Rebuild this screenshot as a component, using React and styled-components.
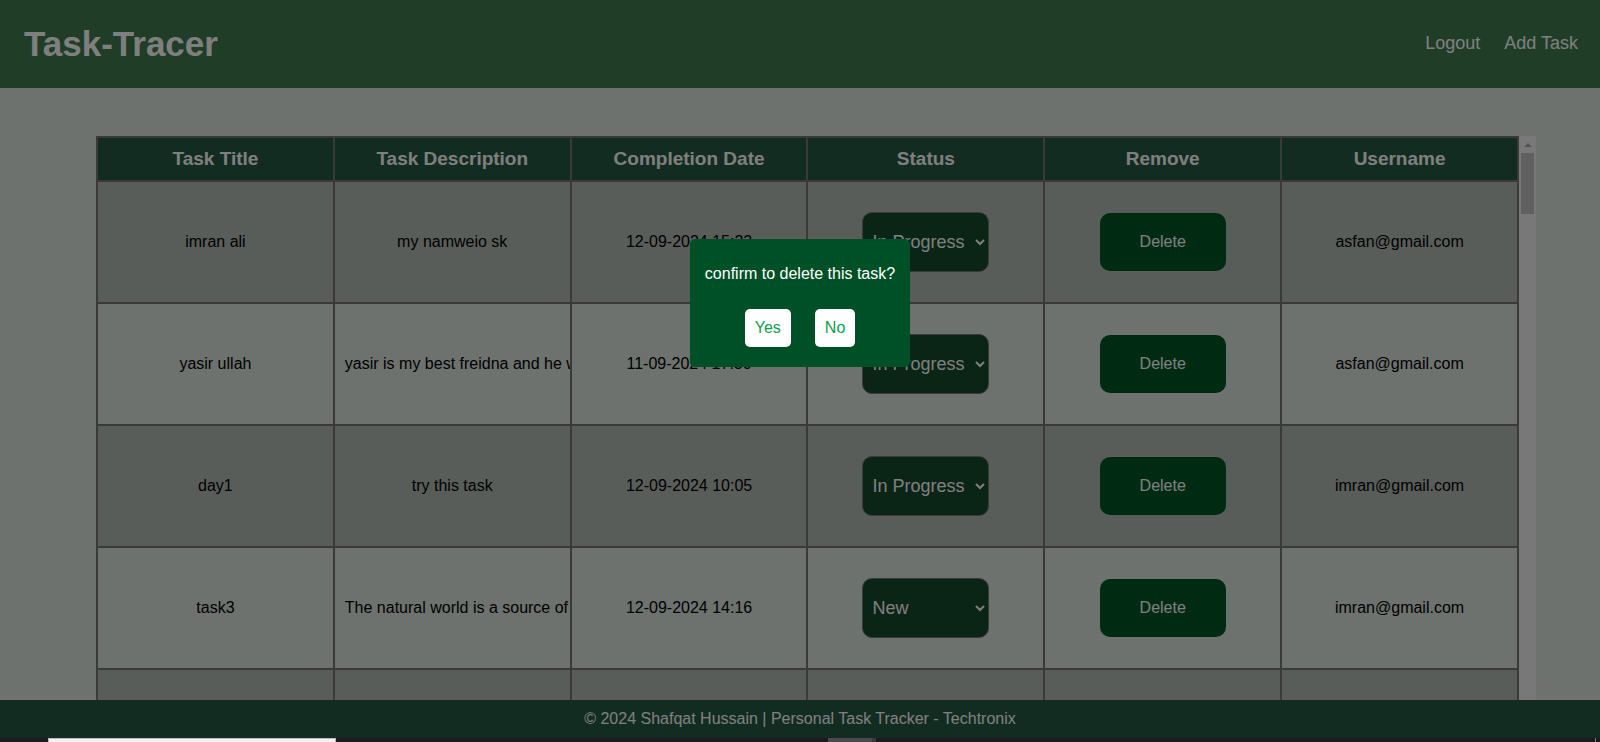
import React from "react";
import styled, { createGlobalStyle } from "styled-components";

const GlobalStyle = createGlobalStyle`
  * { box-sizing: border-box; }
  html, body { margin: 0; height: 100%; overflow: hidden; }
  #root { height: 100%; }
  body, button, select { font-family: "Liberation Sans", Arial, sans-serif; font-size: 16px; }
`;

const Page = styled.div`
  height: 100%;
  display: flex;
  flex-direction: column;
  background: #dbe4dd;
`;

const Header = styled.header`
  flex: none;
  height: 88px;
  padding: 0 22px 0 24px;
  display: flex;
  align-items: center;
  justify-content: space-between;
  background: #407a50;
`;

const Brand = styled.h1`
  margin: 0;
  font-size: 35px;
  line-height: 40px;
  color: #fff;
`;

const Nav = styled.nav`
  display: flex;
  gap: 24px;
  padding-bottom: 2px;
`;

const NavLink = styled.a`
  font-size: 18px;
  line-height: 20px;
  color: #fff;
  text-decoration: none;
`;

const Main = styled.main`
  flex: 1;
  min-height: 0;
  margin: 48px 4% 0 6%;
  display: flex;
`;

const TableArea = styled.div`
  flex: 1;
  min-width: 0;
  overflow: hidden;
`;

const Table = styled.table`
  width: 100%;
  table-layout: fixed;
  border-collapse: collapse;
`;

const HeadCell = styled.th`
  height: 44px;
  padding: 0 10px;
  border: 2px solid #787472;
  background: #245842;
  color: #fff;
  font-size: 19px;
`;

const Row = styled.tr`
  height: 122px;
  &:nth-child(odd) { background: #b3bbb4; }
`;

const Cell = styled.td`
  padding: 0 10px;
  border: 2px solid #787472;
  color: #000;
  text-align: center;
  white-space: nowrap;
  overflow: hidden;
`;

const StatusSelect = styled.select`
  display: block;
  width: 127px;
  height: 60px;
  margin: 0 auto;
  padding: 0 6px 0 5px;
  border: 1px solid #787472;
  border-radius: 10px;
  background: #14482a;
  color: #fff;
  font-size: 18px;
`;

const DeleteButton = styled.button`
  display: block;
  width: 126px;
  height: 58px;
  margin: 0 auto;
  border: 0;
  border-radius: 10px;
  background: #005626;
  color: #fff;
`;

const Scrollbar = styled.div`
  flex: none;
  width: 17px;
  display: flex;
  flex-direction: column;
  align-items: center;
  background: #f1f1f1;
`;

const ScrollUp = styled.svg`
  width: 17px;
  height: 17px;
  display: block;
`;

const Thumb = styled.div`
  width: 13px;
  height: 61px;
  background: #c1c1c1;
`;

const Footer = styled.footer`
  flex: none;
  height: 38px;
  background: #245842;
  color: #fff;
  line-height: 38px;
  text-align: center;
`;

const Taskbar = styled.div`
  position: relative;
  z-index: 2;
  flex: none;
  height: 4px;
  padding-left: 3%;
  display: flex;
  background: #1c1a1c;
`;

const TaskbarSearch = styled.div`
  width: 288px;
  border: 1px solid #b8b8b8;
  border-bottom: 0;
  background: #f3f1f3;
`;

const TaskbarApp = styled.div`
  width: 48px;
  margin-left: 492px;
  border-right: 4px solid #3a383a;
  background: #4b494b;
`;

const TaskbarEdge = styled.div`
  width: 5px;
  margin-left: auto;
  border-left: 1px solid #777;
`;

const Overlay = styled.div`
  position: fixed;
  inset: 0;
  z-index: 1;
  display: flex;
  justify-content: center;
  align-items: flex-start;
  padding-top: 239px;
  background: rgba(0, 0, 0, 0.5);
`;

const Dialog = styled.div`
  padding: 26px 15px 20px;
  border-radius: 5px;
  background: #005027;
  color: #fff;
`;

const Message = styled.p`
  margin: 0 0 26px;
  line-height: 18px;
`;

const Actions = styled.div`
  display: flex;
  justify-content: center;
  gap: 24px;
`;

const ActionButton = styled.button`
  padding: 10px;
  border: 0;
  border-radius: 5px;
  background: #fff;
  color: #0aa04e;
  line-height: 18px;
`;

const columns = ["Task Title", "Task Description", "Completion Date", "Status", "Remove", "Username"];

const tasks = [
  ["imran ali", "my namweio sk", "12-09-2024 15:23", "In Progress", "asfan@gmail.com"],
  ["yasir ullah", "yasir is my best freidna and he w", "11-09-2024 17:30", "In Progress", "asfan@gmail.com"],
  ["day1", "try this task", "12-09-2024 10:05", "In Progress", "imran@gmail.com"],
  ["task3", "The natural world is a source of ", "12-09-2024 14:16", "New", "imran@gmail.com"],
];

export default function App() {
  return (
    <Page>
      <GlobalStyle />
      <Header>
        <Brand>Task-Tracer</Brand>
        <Nav>
          <NavLink href="#logout">Logout</NavLink>
          <NavLink href="#add">Add Task</NavLink>
        </Nav>
      </Header>
      <Main>
        <TableArea>
          <Table>
            <thead>
              <tr>{columns.map((c) => <HeadCell key={c}>{c}</HeadCell>)}</tr>
            </thead>
            <tbody>
              {tasks.map(([title, description, date, status, user]) => (
                <Row key={title}>
                  <Cell>{title}</Cell>
                  <Cell>{description}</Cell>
                  <Cell>{date}</Cell>
                  <Cell>
                    <StatusSelect aria-label={`Status of ${title}`} defaultValue={status}>
                      <option>New</option>
                      <option>In Progress</option>
                    </StatusSelect>
                  </Cell>
                  <Cell><DeleteButton type="button">Delete</DeleteButton></Cell>
                  <Cell>{user}</Cell>
                </Row>
              ))}
              <Row>{columns.map((c) => <Cell key={c} />)}</Row>
            </tbody>
          </Table>
        </TableArea>
        <Scrollbar aria-hidden="true">
          <ScrollUp viewBox="0 0 17 17"><path d="M5 11h8L9 7z" fill="#a3a3a3" /></ScrollUp>
          <Thumb />
        </Scrollbar>
      </Main>
      <Footer>© 2024 Shafqat Hussain | Personal Task Tracker - Techtronix</Footer>
      <Taskbar>
        <TaskbarSearch />
        <TaskbarApp />
        <TaskbarEdge />
      </Taskbar>
      <Overlay>
        <Dialog role="dialog" aria-modal="true" aria-labelledby="confirm-message">
          <Message id="confirm-message">confirm to delete this task?</Message>
          <Actions>
            <ActionButton type="button">Yes</ActionButton>
            <ActionButton type="button">No</ActionButton>
          </Actions>
        </Dialog>
      </Overlay>
    </Page>
  );
}
